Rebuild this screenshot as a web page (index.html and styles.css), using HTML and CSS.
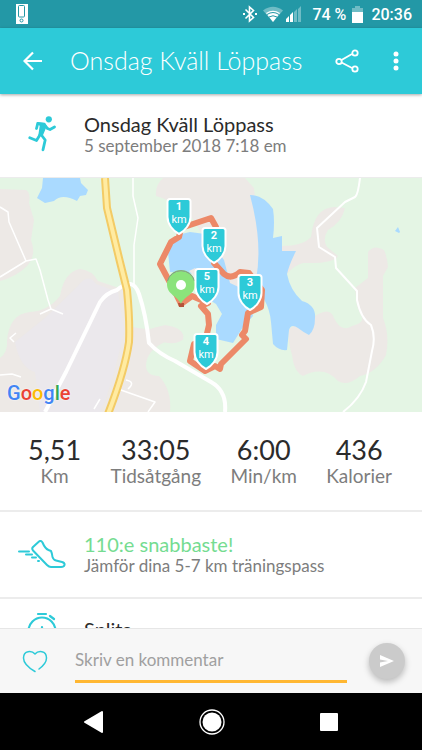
FILE: index.html
```html
<!DOCTYPE html>
<html lang="sv">
<head>
  <meta charset="UTF-8">
  <meta name="viewport" content="width=device-width, initial-scale=1.0">
  <title>Onsdag Kväll Löppass</title>
  <link rel="stylesheet" href="styles.css">
</head>
<body>
  <div class="status-bar">
    <svg class="device-icon" width="12" height="20" viewBox="0 0 12 20">
      <rect width="12" height="20" fill="#fff"/>
      <rect x="2.5" y="1.5" width="6" height="11.5" rx="1" fill="#fff" stroke="#2398a6"/>
      <circle cx="5.5" cy="16.5" r="1.5" fill="none" stroke="#2398a6"/>
    </svg>
    <div class="status-right">
      <svg width="16" height="18" viewBox="0 0 16 18" fill="none" stroke="#fff" stroke-width="1.6">
        <path d="M3.5 4.5l8 8L7.5 16V2l4 3.500-8 8"/>
        <path d="M1 9h2M13 9h2" stroke-width="2"/>
      </svg>
      <svg class="wifi-icon" width="20" height="16" viewBox="0 0 20 16" fill="#fff">
        <path d="M0 4.500Q10-3 20 4.500L10 16z" opacity=".35"/>
        <path d="M3 7Q10 2.500 17 7L10 16z"/>
        <path d="M4 8.500Q10 4.500 16 8.500M6 11Q10 8.500 14 11" fill="none" stroke="#2398a6" stroke-width="1"/>
      </svg>
      <svg class="signal-icon" width="16" height="16" viewBox="0 0 16 16" fill="#fff">
        <path d="M0 16v-3l3-3v6zM4 16V9l3-3v10z"/>
        <path d="M8 16V6l3-3v13zM12 16V3l3-3v16z" opacity=".35"/>
      </svg>
      <span class="battery-text">74 %</span>
      <svg class="battery-icon" width="11" height="17" viewBox="0 0 11 17" fill="#fff">
        <path d="M3 0h5v2h3v15H0V2h3z" opacity=".35"/>
        <path d="M0 6h11v11H0z"/>
      </svg>
      <span>20:36</span>
    </div>
  </div>

  <header class="app-bar">
    <button class="icon-button" aria-label="Tillbaka">
      <svg width="20" height="20" viewBox="0 0 20 20" fill="none" stroke="#fff" stroke-width="2.200">
        <path d="M19 10H1.500M10 1.500L1.500 10l8.500 8.500"/>
      </svg>
    </button>
    <h1>Onsdag Kväll Löppass</h1>
    <button class="icon-button share-button" aria-label="Dela">
      <svg width="24" height="24" viewBox="0 0 24 24" fill="none" stroke="#fff" stroke-width="1.800">
        <path d="M6.500 11L17 5M6.500 13.500L17 19"/>
        <circle cx="4" cy="12.500" r="2.700"/>
        <circle cx="20" cy="4" r="2.700"/>
        <circle cx="20" cy="20" r="2.700"/>
      </svg>
    </button>
    <button class="icon-button" aria-label="Fler val">
      <svg width="6" height="20" viewBox="0 0 6 20" fill="#fff">
        <circle cx="3" cy="3" r="2.500"/>
        <circle cx="3" cy="10" r="2.500"/>
        <circle cx="3" cy="17" r="2.500"/>
      </svg>
    </button>
  </header>

  <main>
    <section class="row row-title">
      <div class="row-icon">
        <svg width="28" height="36" viewBox="0 0 28 36" fill="none" stroke="#2dcad8" stroke-width="2.800" stroke-linecap="round" stroke-linejoin="round">
          <circle cx="20.800" cy="3.300" r="3.100" fill="#2dcad8" stroke="none"/>
          <path d="M9.500 7L16.500 7.500 18 10 14.500 18.500 11 19.500 12.500 9.500z" fill="#2dcad8" stroke-width="1.500"/>
          <path d="M8.500 12.500L9.700 7.500 16 8.500 19.500 12.500l2.500 1 4.500-2.500M12.500 18l-4 6.500L1.800 21.800M13 18.500l4.200 5.500-2.200 9.800"/>
        </svg>
      </div>
      <div>
        <h2>Onsdag Kväll Löppass</h2>
        <p>5 september 2018 7:18 em</p>
      </div>
    </section>

    <section class="map">
      <svg class="map-drawing" viewBox="0 178 422 234" preserveAspectRatio="xMidYMid slice">
        <defs>
          <path id="pin" d="M-9-35H9Q11.500-35 11.500-32.500V-17C11.500-10 6-3 0 0C-6-3-11.500-10-11.500-17V-32.500Q-11.500-35-9-35z"/>
        </defs>
        <rect x="0" y="178" width="422" height="234" fill="#e4f5e4"/>
        <!-- built-up land -->
        <g fill="#ede9e6">
          <path d="M0 189L26 190Q31 193 29 203L34 220 31 240Q37 255 27 266Q16 277 0 281z"/>
          <path d="M60 296Q64 272 80 269Q92 270 98 281L125 290V325Q138 329 150 329L165 325Q186 328 183 340L165 342Q147 350 146 365Q146 376 159 376Q172 390 170 412H0V358Q8 352 7 341Q9 314 30 312Q48 311 60 296z"/>
          <path d="M163 178H245L254 188 259 240 262 300 240 320 211 290 205 245Q198 220 182 209Q168 199 156 196Q155 185 163 178z"/>
          <path d="M281 246Q303 246 311 237Q314 208 334 207L345 208Q342 222 328 230Q322 239 327 247L338 256Q334 264 303 263Q293 266 287 274z"/>
          <path d="M355 288L368 278V252Q374 244 384 250Q387 256 388 267L383 276V318Q390 335 386 355Q376 373 360 376Q347 387 338 381Q324 365 303 376Q294 372 292 355Q286 335 290 328L312 318Q330 305 334 318Q341 333 352 326Q366 323 361 315L357 306z"/>
          <path d="M150 330Q159 324 170 329Q183 330 182 340Q174 346 160 341Q150 336 150 330z"/>
        </g>
        <path d="M78 286Q88 272 96 284L118 292 124 330Q116 370 106 398L100 412H40L35 372Q20 368 15 342L45 318z" fill="#ebe8ec"/>
        <!-- lakes -->
        <g fill="#aadaff">
          <path d="M43 178H80L81 183 88 190 86 195 80 196 77 201Q62 193 54 201L45 203 37 198 42 188z"/>
          <path d="M250 195Q263 195 273 209Q275 222 273 238L282 236V251H296Q289 265 287 274Q290 290 302 301Q316 305 315 318Q315 330 309 335Q303 332 298 328Q291 323 289 330L287 350Q279 351 273 344L271 322Q270 310 264 299L256 280Q263 243 250 195z"/>
          <path d="M168 252L177 235 190 232 205 234 224 260 230 283 245 290 253 316 243 327 233 343 216 339V325L222 314 216 304 203 296 194 274 170 272z"/>
          <path d="M398 227l2 5-1 1-4-2z"/>
        </g>
        <path d="M189 271l6-3 8 10-4 3z" fill="#ede9e6"/>
        <!-- roads -->
        <g fill="none" stroke="#fff" stroke-linejoin="round">
          <path d="M133 178V196L138 218 134 245V285" stroke-width="1.500"/>
          <path d="M0 207L8 212 9 222 26 261 0 277M26 261L36 259 40 270 48 300 51 309 40 314M51 309L63 314M0 375L12 374 21 377M16 333L10 338 14 342M118 389L155 402 148 412M126 380Q136 382 128 389M100 399L94 409" stroke-width="1.500"/>
          <path d="M360 178Q358 195 355 197L345 202 317 228 319 247 335 257 336 268 357 291 357 300Q361 319 371 325Q376 337 372 351L366 382Q360 399 343 412" stroke-width="2"/>
          <path d="M45 412L66 372 100 302Q106 293 117 290Q133 276 139 294Q146 315 149 343Q159 354 175 361L211 382Q227 391 225 412" stroke-width="4"/>
        </g>
        <g fill="none">
          <path d="M105 178L107 208 120 262 127 290Q130 321 129 342Q125 370 108 414" stroke="#f3cb65" stroke-width="8"/>
          <path d="M105 178L107 208 120 262 127 290Q130 321 129 342Q125 370 108 414" stroke="#ffeba1" stroke-width="4"/>
        </g>
        <!-- running route -->
        <path d="M181 304L175 292 160 264 171 242 179 237 181 228 211 218 216 227 214 263 224 274Q231 280 240 272L249 273 262 290 261 307 248 313 245 331 242 335 246 339 221 364 220 369 215 366 205 371 190 361 194 344 205 342 209 325 208 314 201 306 208 303 192 296z" fill="none" stroke="#ec8968" stroke-width="6" stroke-linejoin="round"/>
        <path d="M178 303h6v4h-5z" fill="#b5533a"/>
        <!-- start -->
        <path d="M181 304C178 296 167 295 167 284A14 14 0 0 1 195 284C195 295 184 296 181 304z" fill="#8be37b"/>
        <path d="M167.500 281A14 14 0 0 1 194.500 281" fill="none" stroke="#87968a" stroke-width="1"/>
        <circle cx="181" cy="285" r="5" fill="#fff"/>
        <!-- kilometre pins -->
        <g class="pin" transform="translate(179 234)"><use href="#pin"/><text y="-24" class="pin-number">1</text><text y="-11">km</text></g>
        <g class="pin" transform="translate(214 263)"><use href="#pin"/><text y="-24" class="pin-number">2</text><text y="-11">km</text></g>
        <g class="pin" transform="translate(207 304)"><use href="#pin"/><text y="-24" class="pin-number">5</text><text y="-11">km</text></g>
        <g class="pin" transform="translate(250 310)"><use href="#pin"/><text y="-24" class="pin-number">3</text><text y="-11">km</text></g>
        <g class="pin" transform="translate(206 369)"><use href="#pin"/><text y="-24" class="pin-number">4</text><text y="-11">km</text></g>
      </svg>
      <div class="google"><span class="blue">G</span><span class="red">o</span><span class="yellow">o</span><span class="blue">g</span><span class="green">l</span><span class="red">e</span></div>
    </section>

    <section class="stats">
      <div class="stat"><strong>5,51</strong><span>Km</span></div>
      <div class="stat"><strong>33:05</strong><span>Tidsåtgång</span></div>
      <div class="stat"><strong>6:00</strong><span>Min/km</span></div>
      <div class="stat"><strong>436</strong><span>Kalorier</span></div>
    </section>

    <section class="row row-compare">
      <div class="row-icon">
        <svg width="48" height="28" viewBox="0 0 48 28" fill="none" stroke="#2dcad8" stroke-width="2" stroke-linecap="round" stroke-linejoin="round">
          <path d="M15 7L21 1.500Q23 0 24.500 2.500Q27 8.500 30.500 10L33 11Q34 13 34.500 17Q35.500 20 38 20.500L44 22Q47 23 46.500 25Q46 27 43 27H33Q31 27 29 25L15 10.500Q13.500 8.500 15 7z"/>
          <path d="M1 11.500H11M8 14.500H14M14 17.500H18M20 21H21"/>
        </svg>
      </div>
      <div>
        <h2 class="highlight">110:e snabbaste!</h2>
        <p>Jämför dina 5-7 km träningspass</p>
      </div>
    </section>

    <section class="row row-splits">
      <div class="row-icon">
        <svg width="30" height="36" viewBox="0 0 30 36" fill="none" stroke="#2dcad8" stroke-width="2.200" stroke-linecap="round">
          <circle cx="15" cy="20" r="13.500"/>
          <path d="M11 3H19M23 5L27 8M15 16V21"/>
        </svg>
      </div>
      <h2>Splits</h2>
    </section>
  </main>

  <form class="comment-bar">
    <button type="button" class="icon-button like-button" aria-label="Gilla">
      <svg width="26" height="23" viewBox="0 0 26 23" fill="none" stroke="#2dcad8" stroke-width="1.500" stroke-linecap="round">
        <path d="M13 4C10 .5 1.500 0 1.500 8C1.500 14 7 18 13 21.500M13 4C16 .5 24.500 0 24.500 8C24.500 13 21 16 17 19"/>
      </svg>
    </button>
    <input type="text" placeholder="Skriv en kommentar" aria-label="Skriv en kommentar">
    <button type="button" class="send-button" aria-label="Skicka">
      <svg width="16" height="14" viewBox="0 0 16 14" fill="#fff">
        <path d="M1 1L15 7 1 13V8.500L9 7 1 5.500z"/>
      </svg>
    </button>
  </form>

  <nav class="nav-bar">
    <button class="icon-button" aria-label="Bakåt">
      <svg width="20" height="24" viewBox="0 0 20 24" fill="#fff" stroke="#fff" stroke-width="2" stroke-linejoin="round">
        <path d="M18 2V22L1 12z"/>
      </svg>
    </button>
    <button class="icon-button" aria-label="Hem">
      <svg width="26" height="26" viewBox="0 0 26 26">
        <circle cx="13" cy="13" r="12" fill="none" stroke="#fff" stroke-width="1.300"/>
        <circle cx="13" cy="13" r="9.500" fill="#fff"/>
      </svg>
    </button>
    <button class="icon-button" aria-label="Översikt">
      <svg width="18" height="18" viewBox="0 0 18 18" fill="#fff">
        <rect width="18" height="18" rx="1"/>
      </svg>
    </button>
  </nav>
</body>
</html>
```

FILE: styles.css
```css
* {
  box-sizing: border-box;
}
body {
  margin: 0;
  height: 100vh;
  display: flex;
  flex-direction: column;
  overflow: hidden;
  background-color: #fff;
  color: #2b2b2b;
  font-family: Lato, "Open Sans", sans-serif;
}
h1, h2, p {
  margin: 0;
  font-weight: 400;
}
svg {
  display: block;
}
button {
  padding: 0;
  border: 0;
  background: none;
}
.icon-button {
  flex: none;
  display: flex;
  justify-content: center;
  align-items: center;
}

/* Status bar */
.status-bar {
  flex: none;
  display: flex;
  justify-content: space-between;
  align-items: center;
  height: 28px;
  padding: 0 10px 0 16px;
  background-color: #2398a6;
  color: #fff;
  font-family: Roboto, sans-serif;
  font-size: 16px;
  font-weight: 500;
}
.status-right {
  display: flex;
  align-items: center;
}
.wifi-icon {
  margin-left: 5px;
}
.signal-icon {
  margin-left: 3px;
}
.battery-text {
  margin-left: 10px;
}
.battery-icon {
  margin: 0 8px 0 6px;
}

/* App bar */
.app-bar {
  flex: none;
  position: relative;
  z-index: 1;
  display: flex;
  align-items: center;
  height: 66px;
  padding: 0 23px;
  background-color: #2dcad8;
  color: #fff;
  box-shadow: 0 1px 3px rgba(0, 0, 0, 0.35);
}
.app-bar h1 {
  flex: 1;
  margin-left: 27px;
  padding-bottom: 2px;
  font-size: 25px;
  font-weight: 300;
  line-height: 32px;
  white-space: nowrap;
}
.share-button {
  margin-right: 34px;
}

main {
  flex: 1;
  min-height: 0;
  overflow: hidden;
}

/* List rows */
.row {
  display: flex;
  align-items: center;
  padding-bottom: 2px;
  border-bottom: 2px solid #ececec;
}
.row-title {
  height: 84px;
  padding-bottom: 4px;
  border-bottom-width: 1px;
}
.row-compare {
  height: 87px;
}
.row-splits {
  height: 64px;
}
.row-icon {
  flex: none;
  display: flex;
  justify-content: center;
  width: 84px;
}
.row h2 {
  font-size: 20px;
  line-height: 24px;
}
.row p {
  color: #7d7d7d;
  font-size: 17px;
  line-height: 20px;
}
.row .highlight {
  color: #75dc91;
}

/* Map */
.map {
  position: relative;
  height: 234px;
}
.map-drawing {
  width: 100%;
  height: 100%;
}
.pin {
  fill: #2dcad8;
  stroke: #fff;
  stroke-width: 2px;
}
.pin text {
  fill: #fff;
  stroke: none;
  font-family: Roboto, sans-serif;
  font-size: 11px;
  text-anchor: middle;
}
.pin .pin-number {
  font-weight: 700;
}
.google {
  position: absolute;
  left: 7px;
  bottom: 7px;
  font-family: Roboto, sans-serif;
  font-size: 20px;
  font-weight: 500;
  line-height: 24px;
  text-shadow: 0 0 2px #fff;
}
.blue { color: #4285f4; }
.red { color: #ea4335; }
.yellow { color: #fbbc05; }
.green { color: #34a853; }

/* Stats */
.stats {
  display: flex;
  justify-content: space-between;
  height: 100px;
  padding: 23px 30px 0 28px;
  border-bottom: 2px solid #ececec;
}
.stat {
  display: flex;
  flex-direction: column;
  align-items: center;
}
.stat strong {
  font-size: 27px;
  font-weight: 400;
  line-height: 30px;
}
.stat span {
  color: #7d7d7d;
  font-size: 19px;
  line-height: 22px;
}

/* Comment field */
.comment-bar {
  flex: none;
  display: flex;
  align-items: center;
  height: 65px;
  padding: 0 17px 0 22px;
  border-top: 1px solid #e6e6e6;
  background-color: #f7f7f7;
}
.comment-bar input {
  flex: 1;
  min-width: 0;
  height: 44px;
  margin: 0 22px 0 27px;
  padding: 0;
  border: 0;
  border-bottom: 3px solid #ffb732;
  outline: 0;
  background: none;
  color: #2b2b2b;
  font: inherit;
  font-size: 17px;
}
.comment-bar input::placeholder {
  color: #a0a0a0;
}
.send-button {
  flex: none;
  display: flex;
  justify-content: center;
  align-items: center;
  width: 36px;
  height: 36px;
  border-radius: 50%;
  background-color: #cbcbcb;
  box-shadow: 0 3px 6px rgba(0, 0, 0, 0.25);
}

/* System navigation */
.nav-bar {
  flex: none;
  display: flex;
  justify-content: space-between;
  align-items: center;
  height: 57px;
  padding: 0 20%;
  background-color: #000;
}
```
